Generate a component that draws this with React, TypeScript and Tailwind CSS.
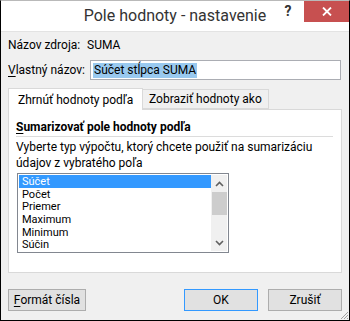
import React from "react";

const items = ["Súčet", "Počet", "Priemer", "Maximum", "Minimum", "Súčin"];

export default function App() {
  return (
    <div
      className="w-[350px] h-[321px] bg-[#f0f0f0] border-l border-r border-b border-black border-t border-t-[#b9b9b9] flex flex-col overflow-hidden text-[12px] text-black"
      style={{ fontFamily: 'Roboto, "Liberation Sans", sans-serif' }}
    >
      {/* Title bar */}
      <div className="relative h-[30px] bg-white shrink-0 flex items-center justify-center">
        <div className="text-[16px] text-[#333] leading-[20px] pb-[1px]">Pole hodnoty - nastavenie</div>
        <div className="absolute right-0 top-0 flex items-start">
          <div className="w-[30px] h-[20px] flex items-center justify-center text-[14px] font-bold text-[#333] pr-[2px] leading-none">?</div>
          <div className="w-[45px] h-[21px] bg-[#c75050] flex items-center justify-center">
            <svg width="10" height="9" viewBox="0 0 10 9">
              <path d="M1 0.5 L9 8.5 M9 0.5 L1 8.5" stroke="white" strokeWidth="1.8" />
            </svg>
          </div>
        </div>
      </div>
      <div className="h-px bg-[#e3e3e3] shrink-0" />

      {/* Body */}
      <div className="flex-1 flex flex-col px-[7px] relative">
        <div className="flex items-center h-[16px] mt-[5px] leading-[16px]">
          <span className="w-[79px]">Názov zdroja:</span>
          <span>SUMA</span>
        </div>
        <div className="flex items-center h-[20px] mt-[7px] leading-[16px]">
          <span className="w-[82px]">
            <span className="underline underline-offset-2">V</span>lastný názov:
          </span>
          <div className="w-[251px] h-[20px] bg-white border border-[#abadb3] flex items-center px-[2px]">
            <span className="bg-[#99c9ef] leading-[15px] px-px">Súčet stĺpca SUMA</span>
          </div>
        </div>

        {/* Tabs */}
        <div className="flex items-end mt-[8px] h-[22px] relative z-10 leading-[16px]">
          <div className="w-[135px] h-[22px] bg-white border border-[#d9d9d9] border-b-0 flex items-center pl-[9px] whitespace-nowrap">
            Zhrnúť hodnoty podľa
          </div>
          <div className="w-[126px] h-[20px] bg-[#f0f0f0] border border-[#d9d9d9] border-l-0 flex items-center pl-[6px] mb-px whitespace-nowrap">
            Zobraziť hodnoty ako
          </div>
        </div>
        <div className="w-[334px] h-[164px] -mt-px bg-white border border-[#d9d9d9] flex flex-col px-[7px] pt-[9px]">
          <div className="font-bold leading-[16px] h-[16px] whitespace-nowrap">
            <span className="underline underline-offset-2">S</span>umarizovať pole hodnoty podľa
          </div>
          <div className="h-px bg-[#dcdcdc] mt-[1px] w-[317px]" />
          <div className="leading-[16px] mt-[2px] whitespace-nowrap">
            Vyberte typ výpočtu, ktorý chcete použiť na sumarizáciu
            <br />
            údajov z vybratého poľa
          </div>
          <div className="mt-[2px] ml-px w-[212px] h-[80px] border border-[#828790] bg-white flex p-px">
            <div className="flex-1 flex flex-col">
              {items.map((it, i) => (
                <div
                  key={it}
                  className={
                    "h-[13px] leading-[13px] text-[11px] pl-[3px] overflow-hidden " +
                    (i === 0 ? "bg-[#3399ff] text-white" : "")
                  }
                >
                  {it}
                </div>
              ))}
            </div>
            <div className="w-[16px] bg-[#f0f0f0] flex flex-col items-center">
              <div className="h-[17px] flex items-center justify-center">
                <svg width="9" height="6" viewBox="0 0 9 6">
                  <path d="M1 5 L4.5 1.5 L8 5" stroke="#606060" strokeWidth="1.6" fill="none" />
                </svg>
              </div>
              <div className="w-[15px] h-[23px] bg-[#cdcdcd]" />
              <div className="flex-1" />
              <div className="h-[17px] flex items-center justify-center">
                <svg width="9" height="6" viewBox="0 0 9 6">
                  <path d="M1 1 L4.5 4.5 L8 1" stroke="#606060" strokeWidth="1.6" fill="none" />
                </svg>
              </div>
            </div>
          </div>
        </div>

        {/* Buttons */}
        <div className="flex items-center h-[22px] mt-[16px] leading-[16px]">
          <button className="w-[78px] h-[22px] bg-[#e1e1e1] border border-[#adadad] flex items-center justify-center">
            <span>
              <span className="underline underline-offset-2">F</span>ormát čísla
            </span>
          </button>
          <div className="flex-1" />
          <button className="w-[74px] h-[22px] bg-[#e1e1e1] border border-[#3399ff] flex items-center justify-center">
            OK
          </button>
          <button className="w-[74px] h-[22px] ml-[10px] bg-[#e1e1e1] border border-[#adadad] flex items-center justify-center">
            Zrušiť
          </button>
        </div>
        <svg className="absolute right-0 bottom-0" width="10" height="10" viewBox="0 0 10 10">
          <path d="M9 2 L2 9 M9 5 L5 9 M9 8 L8 9" stroke="#a0a0a0" strokeWidth="1" />
        </svg>
      </div>
    </div>
  );
}
